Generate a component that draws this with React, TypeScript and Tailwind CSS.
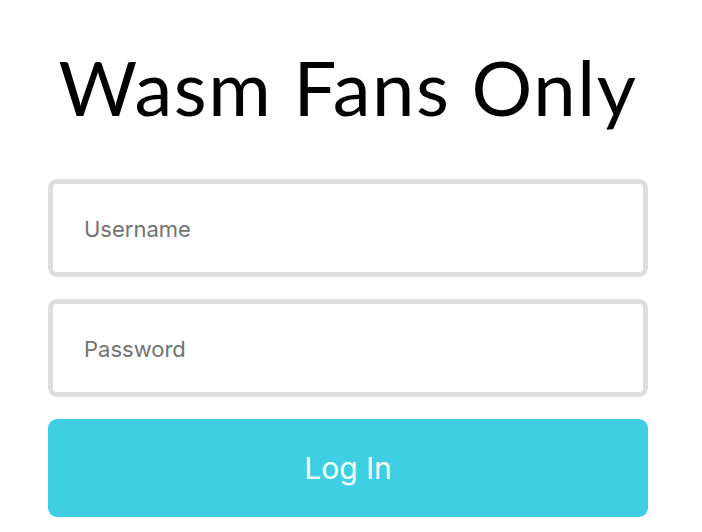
export default function App() {
    return (
        <div className="min-h-[532px] bg-white">
            <div className="ml-[48px] w-[600px] pt-[37px]">
                <h1 className="text-center text-[76px] leading-[100px] tracking-[1.6px] text-black font-normal" style={{ fontFamily: '"Lato", "DejaVu Sans", sans-serif' }}>
                    Wasm Fans Only
                </h1>
                <form className="mt-[42px] flex flex-col gap-[22px]" style={{ fontFamily: 'Inter, "Noto Sans", sans-serif' }}>
                    <input
                        type="text"
                        placeholder="Username"
                        className="h-[98px] w-full rounded-[9px] border-[5px] border-[#dedede] bg-white px-[31px] pt-[2px] text-[22px] text-black outline-none placeholder:text-[#737373]"
                    />
                    <input
                        type="password"
                        placeholder="Password"
                        className="h-[98px] w-full rounded-[9px] border-[5px] border-[#dedede] bg-white px-[31px] pt-[2px] text-[22px] text-black outline-none placeholder:text-[#737373]"
                    />
                    <button type="button" className="h-[98px] w-full rounded-[9px] bg-[#3ecfe2] text-[30px] text-white">
                        Log In
                    </button>
                </form>
            </div>
        </div>
    )
}
